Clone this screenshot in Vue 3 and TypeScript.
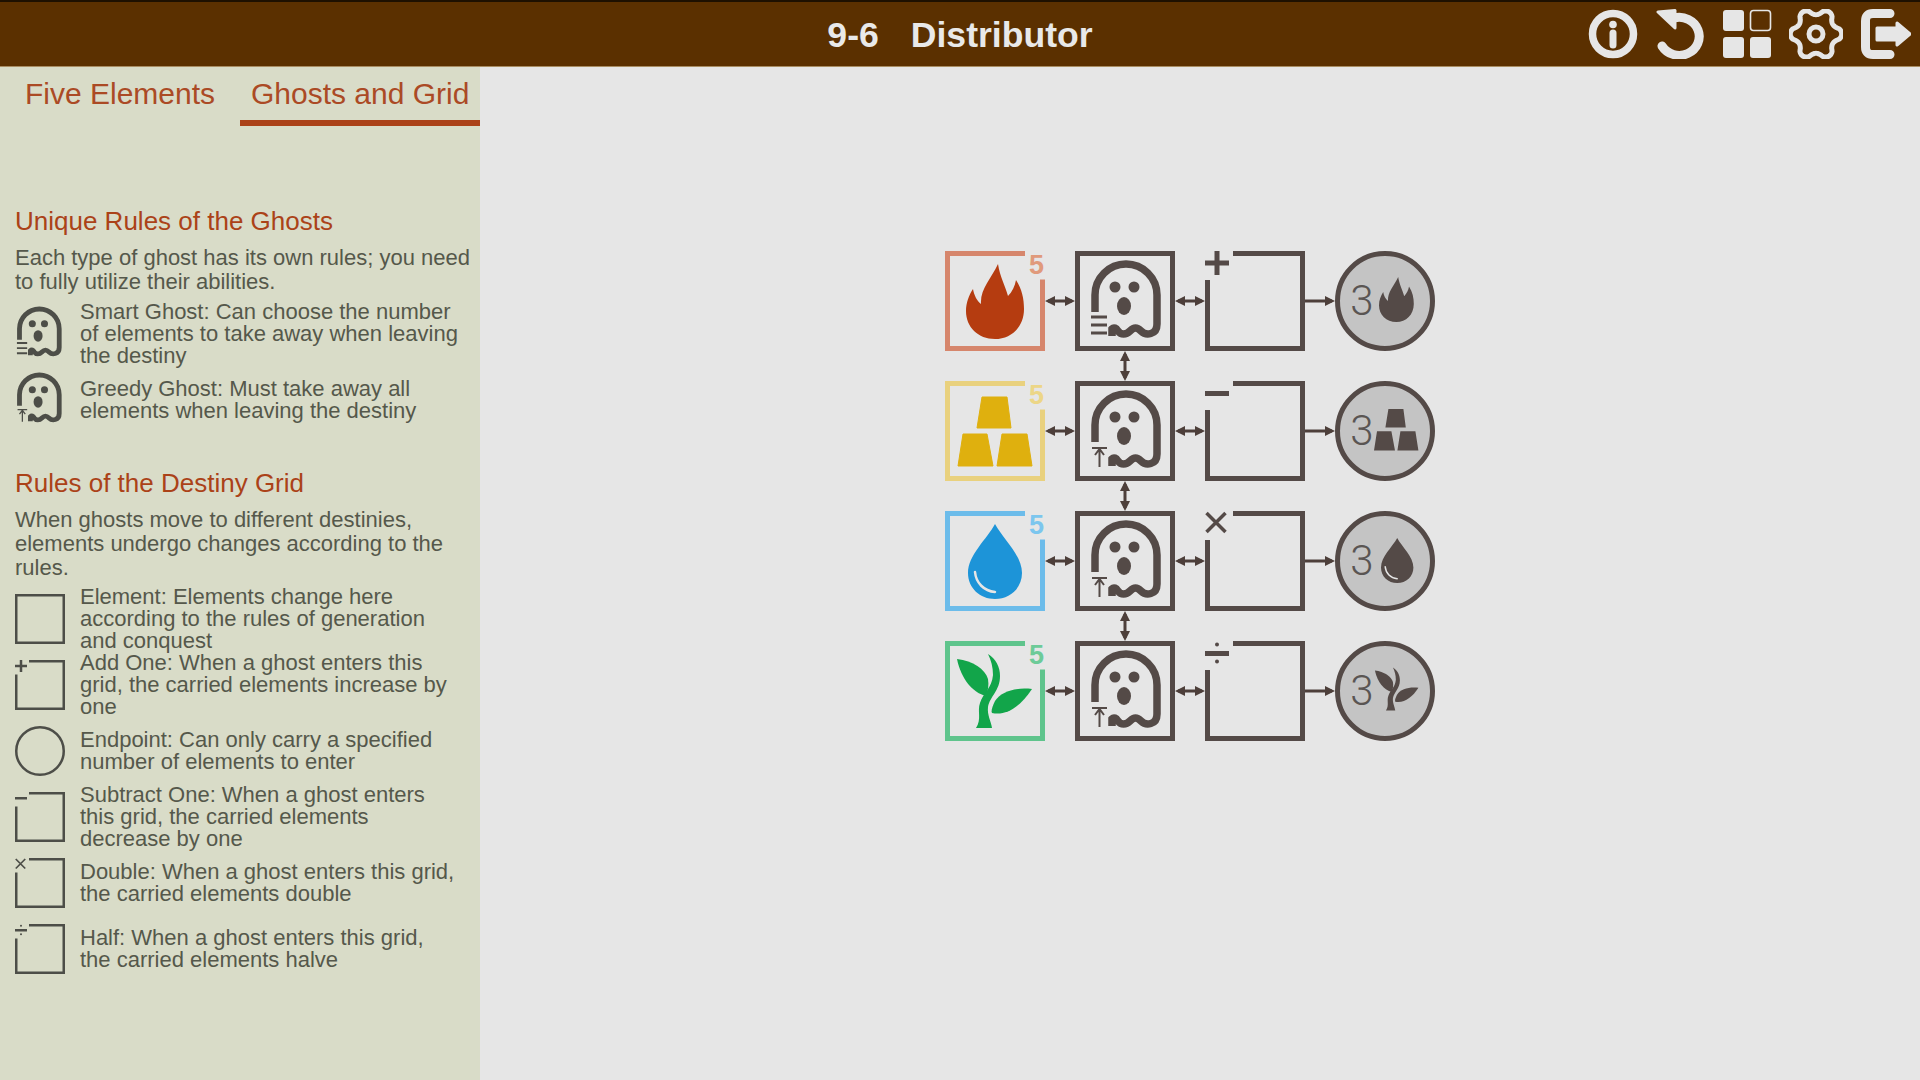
<script setup lang="ts">
/**
 * Level screen - rules sidebar on the left, puzzle board on the right
 */

type Element = 'fire' | 'gold' | 'water' | 'wood'
type Op = 'plus' | 'minus' | 'times' | 'divide'

interface Row {
  element: Element
  ghost: 'smart' | 'greedy'
  op: Op
}

const rows: Row[] = [
  { element: 'fire', ghost: 'smart', op: 'plus' },
  { element: 'gold', ghost: 'greedy', op: 'minus' },
  { element: 'water', ghost: 'greedy', op: 'times' },
  { element: 'wood', ghost: 'greedy', op: 'divide' }
]

const goalTransform: Record<Element, string> = {
  fire: 'translate(31.4 18.2) scale(0.6)',
  gold: 'translate(31.2 18.4) scale(0.6)',
  water: 'translate(32.2 19.2) scale(0.6)',
  wood: 'translate(33 19) scale(0.58)'
}

const ghostRules = [
  { icon: 'smart', text: 'Smart Ghost: Can choose the number of elements to take away when leaving the destiny' },
  { icon: 'greedy', text: 'Greedy Ghost: Must take away all elements when leaving the destiny' }
]

const gridRules: { icon: Op | 'box' | 'circle'; text: string }[] = [
  { icon: 'box', text: 'Element: Elements change here according to the rules of generation and conquest' },
  { icon: 'plus', text: 'Add One: When a ghost enters this grid, the carried elements increase by one' },
  { icon: 'circle', text: 'Endpoint: Can only carry a specified number of elements to enter' },
  { icon: 'minus', text: 'Subtract One: When a ghost enters this grid, the carried elements decrease by one' },
  { icon: 'times', text: 'Double: When a ghost enters this grid, the carried elements double' },
  { icon: 'divide', text: 'Half: When a ghost enters this grid, the carried elements halve' }
]

// six soft lobes, left/right lobes sit on the horizontal axis
const gearPath = Array.from({ length: 145 }, (_, i) => {
  const a = (i / 144) * Math.PI * 2
  const c = Math.cos(6 * a)
  const r = 22.5 + 3.2 * Math.sign(c) * Math.pow(Math.abs(c), 0.7)
  return `${i ? 'L' : 'M'}${(27 + r * Math.cos(a)).toFixed(2)} ${(25 + r * Math.sin(a)).toFixed(2)}`
}).join(' ') + 'Z'
</script>

<template>
  <div class="screen">
    <svg class="defs" aria-hidden="true">
      <symbol id="fire" viewBox="0 0 100 100">
        <path d="M53 13C55 26 60 34 63 45C67 41 70 35 71 29C77 38 79 48 79 58C79 76 66 88 50 88C33 88 21 76 21 60C21 52 24 44 28 38C29 44 32 50 36 53C35 38 46 28 53 13Z" />
      </symbol>
      <symbol id="gold" viewBox="0 0 100 100">
        <path d="M37 16H62L66 47H32ZM18 53H42L48 85H13ZM57 53H82L87 85H52Z" stroke-width="1" stroke-linejoin="round" />
      </symbol>
      <symbol id="water" viewBox="0 0 100 100">
        <path d="M50 13C58 28 77 44 77 62C77 77 65 88 50 88C35 88 23 77 23 62C23 44 42 28 50 13Z" />
        <path class="shine" d="M30 61C31 72 39 80 50 81" />
      </symbol>
      <symbol id="wood" viewBox="0 0 100 100">
        <path d="M12 18C28 20 40 28 43 38C44 44 43 50 41 55C28 52 16 38 12 18Z" />
        <path d="M87 48C72 46 56 50 50 60C47 66 46 70 47 72C62 75 76 65 87 48Z" />
        <path d="M31 87C37 78 32 70 35 62C38 52 47 47 48 34C48 26 46 19 43 13C51 18 55 26 55 35C55 50 45 55 43 66C42 74 46 80 47 87Z" />
      </symbol>
      <symbol id="ghost" viewBox="0 0 100 100">
        <path class="ghost-line" d="M20 61V44A31 31 0 0 1 82 44V73C82 84 71 85 66 80C62 76 59 76 55 80C51 84 46 84 43 80C41 77 39 76 37 78V85" />
        <circle cx="40" cy="36" r="5.5" />
        <circle cx="59" cy="36" r="5.5" />
        <ellipse cx="49" cy="55" rx="7" ry="9" />
      </symbol>
      <symbol id="mark-smart" viewBox="0 0 100 100">
        <path class="mark-line thick" d="M16 66H32M16 74H32M16 82H32" />
      </symbol>
      <symbol id="mark-greedy" viewBox="0 0 100 100">
        <path class="mark-line" d="M17 67H32M24.5 86V68M20 74L24.5 68L29 74" />
      </symbol>
      <symbol id="op-plus" viewBox="0 0 100 100">
        <path class="op-line" d="M0 12H24M12 0V24" />
      </symbol>
      <symbol id="op-minus" viewBox="0 0 100 100">
        <path class="op-line" d="M0 12.5H24" />
      </symbol>
      <symbol id="op-times" viewBox="0 0 100 100">
        <path class="op-line thin" d="M1.5 2L20.5 21M20.5 2L1.5 21" />
      </symbol>
      <symbol id="op-divide" viewBox="0 0 100 100">
        <path class="op-line" d="M0 12.5H24" />
        <circle cx="12" cy="3.5" r="2" />
        <circle cx="12" cy="20.5" r="2" />
      </symbol>
    </svg>

    <header class="topbar">
      <span></span>
      <h1 class="title"><span>9-6</span><span>Distributor</span></h1>
      <div class="actions">
        <svg viewBox="0 0 50 50" class="action">
          <circle cx="25" cy="25" r="20.5" class="action-line" />
          <circle cx="25" cy="15.5" r="3.8" class="action-fill" />
          <path d="M25 24V36" class="action-line wide" />
        </svg>
        <svg viewBox="0 0 50 50" class="action">
          <path d="M7 37A20 19 0 1 0 19 9" class="action-line round" />
          <path d="M3 3L20 1.5V19Z" class="action-fill join" />
        </svg>
        <svg viewBox="0 0 50 50" class="action">
          <rect x="1" y="1" width="21" height="21" rx="3" class="action-fill" />
          <rect x="28.5" y="1.5" width="20" height="20" rx="3" class="action-line hair" />
          <rect x="1" y="28" width="21" height="21" rx="3" class="action-fill" />
          <rect x="28" y="28" width="21" height="21" rx="3" class="action-fill" />
        </svg>
        <svg viewBox="0 0 54 50" class="action gear">
          <path :d="gearPath" class="action-line slim" />
          <circle cx="27" cy="25" r="7" class="action-line slim" />
        </svg>
        <svg viewBox="0 0 50 50" class="action">
          <path d="M29 4.5H12Q4.5 4.5 4.5 12V38Q4.5 45.5 12 45.5H29" class="action-line round" />
          <path d="M16 19H36V14L49 25L36 36V31H16Z" class="action-fill join" />
        </svg>
      </div>
    </header>

    <div class="content">
      <aside class="sidebar">
        <nav class="tabs">
          <a class="tab">Five Elements</a>
          <a class="tab tab--active">Ghosts and Grid</a>
        </nav>

        <section class="rules rules--ghosts">
          <h2>Unique Rules of the Ghosts</h2>
          <p>Each type of ghost has its own rules; you need to fully utilize their abilities.</p>
          <div v-for="rule in ghostRules" :key="rule.icon" class="rule">
            <svg class="rule-icon" viewBox="13 13 78 78">
              <use href="#ghost" width="100" height="100" />
              <use :href="`#mark-${rule.icon}`" width="100" height="100" />
            </svg>
            <span>{{ rule.text }}</span>
          </div>
        </section>

        <section class="rules rules--grid">
          <h2>Rules of the Destiny Grid</h2>
          <p>When ghosts move to different destinies, elements undergo changes according to the rules.</p>
          <div v-for="rule in gridRules" :key="rule.icon" class="rule">
            <svg class="rule-icon" viewBox="0 0 100 100">
              <circle v-if="rule.icon === 'circle'" cx="50" cy="50" r="47.5" class="box-line" />
              <rect v-else-if="rule.icon === 'box'" x="2.5" y="2.5" width="95" height="95" class="box-line" />
              <template v-else>
                <path d="M28 2.5H97.5V97.5H2.5V29" class="box-line" />
                <use :href="`#op-${rule.icon}`" width="100" height="100" />
              </template>
            </svg>
            <span>{{ rule.text }}</span>
          </div>
        </section>
      </aside>

      <main class="stage">
        <div class="board">
          <template v-for="(row, i) in rows" :key="row.element">
            <div class="cell cell--element" :class="`cell--${row.element}`">
              <svg viewBox="0 0 100 100">
                <path d="M80 2.5H2.5V97.5H97.5V28.5" class="element-frame" />
                <use :href="`#${row.element}`" width="100" height="100" class="element-art" />
                <text x="91.5" y="23" class="element-count">5</text>
              </svg>
            </div>
            <svg class="link" viewBox="0 0 30 12"><path d="M3 6H27" /><path class="head" d="M0 6L10 1V11ZM30 6L20 1V11Z" /></svg>

            <div class="cell">
              <svg viewBox="0 0 100 100">
                <rect x="2.5" y="2.5" width="95" height="95" class="board-line" />
                <use href="#ghost" width="100" height="100" />
                <use :href="`#mark-${row.ghost}`" width="100" height="100" />
              </svg>
            </div>
            <svg class="link" viewBox="0 0 30 12"><path d="M3 6H27" /><path class="head" d="M0 6L10 1V11ZM30 6L20 1V11Z" /></svg>

            <div class="cell">
              <svg viewBox="0 0 100 100">
                <path d="M28 2.5H97.5V97.5H2.5V29" class="board-line" />
                <use :href="`#op-${row.op}`" width="100" height="100" />
              </svg>
            </div>
            <svg class="link" viewBox="0 0 30 12"><path d="M0 6H27" /><path class="head" d="M30 6L20 1V11Z" /></svg>

            <div class="cell">
              <svg viewBox="0 0 100 100">
                <circle cx="50" cy="50" r="47.5" class="goal" />
                <text x="27" y="64" class="goal-count">3</text>
                <use :href="`#${row.element}`" width="100" height="100" :transform="goalTransform[row.element]" />
              </svg>
            </div>

            <svg v-if="i < rows.length - 1" class="link link--down" viewBox="0 0 12 30"><path d="M6 3V27" /><path class="head" d="M6 0L1 10H11ZM6 30L1 20H11Z" /></svg>
          </template>
        </div>
      </main>
    </div>
  </div>
</template>

<style>
html,
body {
  margin: 0;
  background: #e6e6e6;
}
</style>

<style scoped>
.screen {
  width: 1920px;
  height: 1080px;
  display: flex;
  flex-direction: column;
  overflow: hidden;
  font-family: "Liberation Sans", Arial, sans-serif;
  background: #e6e6e6;
}

.defs {
  display: none;
}

/* Top bar */
.topbar {
  height: 64px;
  flex: none;
  display: grid;
  grid-template-columns: 1fr auto 1fr;
  align-items: center;
  background: #5b3000;
  border-top: 2px solid #1e1000;
  border-bottom: 1px solid #a98d62;
}

.title {
  margin: 0;
  padding-top: 2px;
  display: flex;
  gap: 32px;
  color: #e9e9e9;
  font-size: 35.6px;
  font-weight: 700;
}

.actions {
  display: flex;
  justify-content: flex-end;
  gap: 17px;
  padding-right: 9px;
}

.action {
  width: 50px;
  height: 50px;
}

.gear {
  width: 54px;
  margin-right: 1px;
}

.action-line {
  fill: none;
  stroke: #e6e6e6;
  stroke-width: 7.5;
}
.action-line.wide {
  stroke-width: 7;
  stroke-linecap: round;
}
.action-line.round {
  stroke-width: 9;
  stroke-linecap: round;
}
.action-line.hair {
  stroke-width: 1.6;
}
.action-line.slim {
  stroke-width: 5;
}
.action-fill {
  fill: #e6e6e6;
}
.action-fill.join {
  stroke: #e6e6e6;
  stroke-width: 3;
  stroke-linejoin: round;
}

/* Sidebar */
.content {
  flex: 1;
  display: flex;
  min-height: 0;
}

.sidebar {
  width: 480px;
  flex: none;
  background: #d9dcc8;
  color: #55584b;
}

.tabs {
  height: 59px;
  display: flex;
  justify-content: flex-end;
}

.tab {
  box-sizing: border-box;
  height: 59px;
  padding-top: 10px;
  font-size: 30px;
  color: #ab4a25;
}
.tab:first-child {
  width: 240px;
  padding-left: 25px;
}
.tab--active {
  width: 240px;
  padding-left: 11px;
  border-bottom: 6px solid #ab4218;
}

.rules {
  padding-left: 15px;
}
.rules--ghosts {
  margin-top: 76px;
}
.rules--grid {
  margin-top: 31px;
}

.rules h2 {
  margin: 0;
  height: 38px;
  line-height: 38px;
  font-size: 26px;
  font-weight: 400;
  color: #ab4218;
}

.rules p {
  margin: 6px 0 7px;
  width: 458px;
  font-size: 22px;
  line-height: 24px;
}
.rules--grid p {
  margin-bottom: 6px;
}

.rule {
  min-height: 66px;
  display: flex;
  align-items: center;
  gap: 15px;
  font-size: 22px;
  line-height: 22px;
}
.rule span {
  width: 380px;
}

.rule-icon {
  width: 50px;
  height: 50px;
  flex: none;
  overflow: visible;
  color: #4d4e48;
}

.box-line {
  fill: none;
  stroke: #4d4e48;
  stroke-width: 5;
}

/* Board */
.stage {
  flex: 1;
  padding: 184px 0 0 465px;
}

.board {
  display: grid;
  grid-template-columns: 100px 30px 100px 30px 100px 30px 100px;
  align-items: center;
  justify-items: center;
  color: #544a47;
}

.cell,
.cell svg {
  display: block;
  width: 100px;
  height: 100px;
}

.cell svg {
  fill: #544a47;
}

.cell--element {
  grid-column: 1;
}

.link {
  width: 30px;
  height: 12px;
  fill: none;
}
.link path {
  stroke: #4d3f3a;
  stroke-width: 3;
}
.link .head {
  stroke: none;
  fill: #4d3f3a;
}

.link--down {
  grid-column: 3;
  width: 12px;
  height: 30px;
}

.board-line {
  fill: none;
  stroke: #544a47;
  stroke-width: 5;
}

.goal {
  fill: #c4c4c4;
  stroke: #544a47;
  stroke-width: 5;
}

.goal-count {
  font-family: Roboto, "Liberation Sans", sans-serif;
  font-size: 42px;
  font-weight: 300;
  fill: #5a5553;
  text-anchor: middle;
}

.element-frame {
  fill: none;
  stroke-width: 5;
}

.element-count {
  font-size: 27px;
  font-weight: 700;
  text-anchor: middle;
}

.cell--fire .element-frame { stroke: #d6866c; }
.cell--fire .element-art { fill: #b53c10; }
.cell--fire .element-count { fill: #e09a7c; }

.cell--gold .element-frame { stroke: #e9d17e; }
.cell--gold .element-art { fill: #dfb00e; stroke: #dfb00e; }
.cell--gold .element-count { fill: #ecd687; }

.cell--water .element-frame { stroke: #6cbcea; }
.cell--water .element-art { fill: #1d94d8; }
.cell--water .element-count { fill: #7cc6ee; }

.cell--wood .element-frame { stroke: #5fc48c; }
.cell--wood .element-art { fill: #12a54a; }
.cell--wood .element-count { fill: #6dcb98; }
</style>

<style>
/* content of <use> is not reached by scoped rules */
.ghost-line {
  fill: none;
  stroke: currentColor;
  stroke-width: 7.5;
}
#ghost circle,
#ghost ellipse,
#op-divide circle {
  fill: currentColor;
}
.mark-line,
.op-line {
  fill: none;
  stroke: currentColor;
  stroke-width: 2;
}
.mark-line.thick {
  stroke-width: 3;
}
.op-line {
  stroke-width: 5;
}
.op-line.thin {
  stroke-width: 3.5;
}
.shine {
  fill: none;
  stroke: #e6e6e6;
  stroke-width: 2.5;
  stroke-linecap: round;
}
</style>
